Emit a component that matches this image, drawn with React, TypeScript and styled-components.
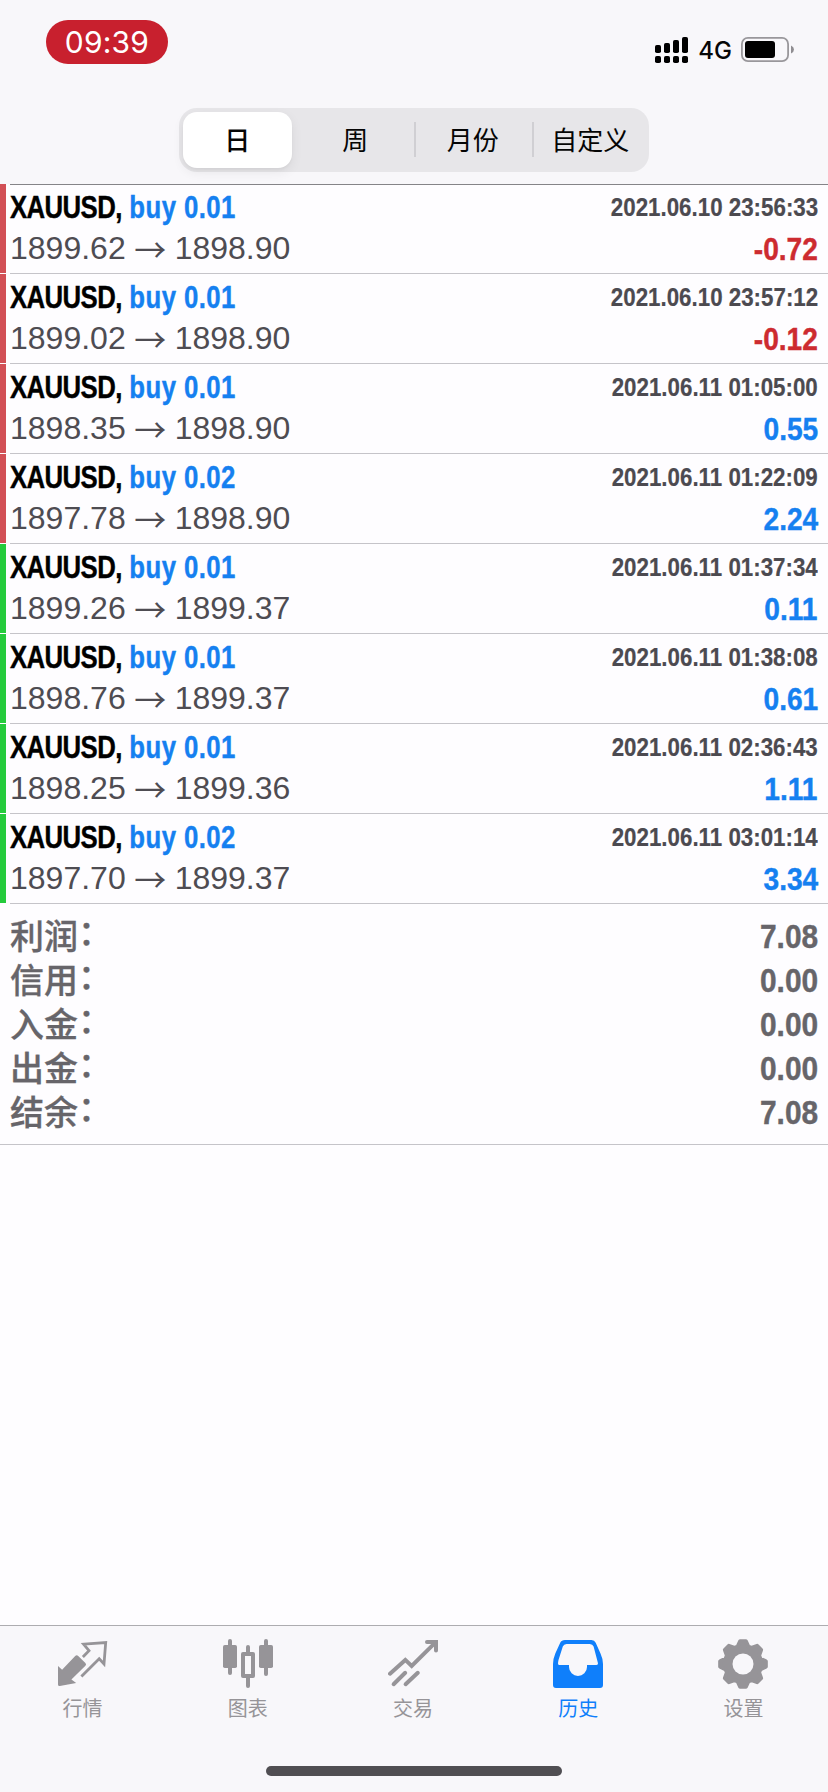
import React from "react";
import styled, { createGlobalStyle } from "styled-components";

const GlobalStyle = createGlobalStyle`
  * { box-sizing: border-box; }
  body { margin: 0; background: #fefdff; }
`;

const CJK = `"Liberation Sans", "Noto Sans CJK SC", sans-serif`;

const Screen = styled.div`
  width: 828px;
  height: 1792px;
  display: flex;
  flex-direction: column;
  background: #fefdff;
  font-family: ${CJK};
  overflow: hidden;
`;

const Header = styled.header`
  height: 184px;
  flex: none;
  background: #f8f7fa;
`;

const StatusBar = styled.div`
  height: 108px;
  display: flex;
  justify-content: space-between;
  align-items: flex-start;
  padding: 20px 33px 0 46px;
`;

const TimePill = styled.div`
  width: 122px;
  height: 44px;
  border-radius: 22px;
  background: #c8202e;
  color: #fff;
  font: 400 30px/44px Inter, sans-serif;
  letter-spacing: 0.2px;
  text-align: center;
`;

const Indicators = styled.div`
  display: flex;
  align-items: flex-start;
  padding-top: 17px;
`;

const Network = styled.span`
  font: 500 24px/28px Inter, sans-serif;
  color: #060606;
  margin: 0 9px 0 10px;
`;

const Segments = styled.div`
  width: 470px;
  height: 64px;
  margin: 0 auto;
  display: grid;
  grid-template-columns: repeat(4, 1fr);
  border-radius: 18px;
  background: #e7e6e9;
`;

const Segment = styled.button<{ $active?: boolean; $divided?: boolean }>`
  border: 0;
  padding: 0 0 3px;
  margin: ${(p) => (p.$active ? "4px 5px 4px 4px" : "0")};
  border-radius: ${(p) => (p.$active ? "14px" : "0")};
  background: ${(p) =>
    p.$active
      ? "#fff"
      : p.$divided
        ? "linear-gradient(#d0cfd3, #d0cfd3) 0 14px / 2px 35px no-repeat"
        : "transparent"};
  box-shadow: ${(p) => (p.$active ? "0 4px 12px rgba(0,0,0,.07), 0 2px 2px rgba(0,0,0,.03)" : "none")};
  color: #050505;
  font: ${(p) => (p.$active ? 500 : 400)} 26px/1 "Noto Sans CJK SC", sans-serif;
`;

const Deal = styled.article<{ $tone: "red" | "green"; $first: boolean }>`
  height: 90px;
  display: grid;
  grid-template-columns: 6px 4px 1fr;
  background:
    linear-gradient(#c5c4c9, #c5c4c9) 10px 89px / 100% 1px no-repeat,
    linear-gradient(${(p) => (p.$first ? "#858488, #858488" : "transparent, transparent")}) 10px 0 / 100% 1px no-repeat;
  &::before {
    content: "";
    height: 89px;
    background: ${(p) => (p.$tone === "red" ? "#d25056" : "#25cb3c")};
  }
`;

const DealBody = styled.div`
  grid-column: 3;
  padding: 6px 10px 0 0;
`;

const Line = styled.div<{ $h: number }>`
  display: flex;
  justify-content: space-between;
  height: ${(p) => p.$h}px;
  line-height: ${(p) => p.$h}px;
  white-space: nowrap;
`;

/* Bold grotesque squeezed horizontally to a condensed width. */
const Condensed = styled.span<{ $scale: number; $end?: boolean }>`
  display: inline-block;
  font-weight: 700;
  transform: scaleX(${(p) => p.$scale});
  transform-origin: ${(p) => (p.$end ? "right" : "left")} center;
  -webkit-text-stroke: 0.4px currentColor;
`;

const Symbol = styled(Condensed)`
  font-size: 32px;
  letter-spacing: -0.75px;
  color: #000;
`;

const Side = styled.span`
  margin-left: 9.5px;
  letter-spacing: 0.5px;
  color: #1580f0;
`;

const Stamp = styled(Condensed)`
  font-size: 25px;
  color: #4c4a50;
  -webkit-text-stroke-width: 0.2px;
`;

const Prices = styled.span`
  display: flex;
  font-size: 32px;
  color: #4e4c52;
`;

const Arrow = styled.span`
  width: 49px;
  text-align: center;
  font-family: "Noto Sans CJK SC", sans-serif;
`;

const Profit = styled(Condensed)<{ $loss: boolean }>`
  font-size: 32px;
  padding-top: 1px;
  color: ${(p) => (p.$loss ? "#cd2b30" : "#1580f0")};
`;

const Summary = styled.section`
  padding: 10px 10px;
  border-bottom: 1px solid #c5c4c9;
  color: #67656a;
  flex: none;
  height: 241px;
`;

const SumLabel = styled.span`
  padding-top: 1px;
  font-weight: 500;
  font-size: 34px;
  -webkit-text-stroke: 0.3px currentColor;
`;

const Colon = styled.span`
  line-height: 0;
  vertical-align: 4px;
`;

const SumValue = styled(Condensed)`
  font-size: 34px;
`;

const TabBar = styled.nav`
  margin-top: auto;
  height: 167px;
  flex: none;
  border-top: 1px solid #adacb0;
  background: #f8f7fa;
  display: flex;
  flex-direction: column;
`;

const Tabs = styled.div`
  display: grid;
  grid-template-columns: repeat(5, 1fr);
  padding: 13px 2px 0 0;
`;

const Tab = styled.a<{ $active: boolean }>`
  display: flex;
  flex-direction: column;
  align-items: center;
  color: ${(p) => (p.$active ? "#0f7ffb" : "#969498")};
  font: 400 20px/28px "Noto Sans CJK SC", sans-serif;
  gap: 5px;
`;

const HomeIndicator = styled.div`
  width: 296px;
  height: 10px;
  border-radius: 5px;
  background: #504e52;
  margin: auto auto 16px;
`;

const gearPath = (() => {
  const pts: string[] = [];
  const shape: [number, number][] = [[-17, 18.2], [-7, 23], [7, 23], [17, 18.2]];
  for (let i = 0; i < 8; i++) {
    for (const [a, r] of shape) {
      const t = ((i * 45 + a) * Math.PI) / 180;
      pts.push(`${(25 + r * Math.sin(t)).toFixed(2)} ${(25 - r * Math.cos(t)).toFixed(2)}`);
    }
  }
  return `M${pts.join("L")}Z`;
})();

const icons: Record<string, React.ReactNode> = {
  quotes: (
    <g transform="translate(-0.6 0)">
      <path
        d="M25.5 18 31.6 11.6 26.2 5.2 48.3 3.6 46.6 25 41.8 19.8 24 37.5"
        fill="none"
        stroke="currentColor"
        strokeWidth="2.8"
      />
      <path d="M.6 27 4.7 30.7 17.8 17Q19.3 15.5 20.8 16.9L28 24Q29.4 25.4 28 26.8L14 40.5 18.8 44 2.4 47Q.6 47.2 .6 45.5Z" fill="currentColor" />
    </g>
  ),
  chart: (
    <g fill="currentColor">
      <rect x="5" width="4" height="36" rx="2" />
      <rect y="6" width="14" height="23" rx="1.8" />
      <rect x="41" width="4" height="37" rx="2" />
      <rect x="36" y="6" width="14" height="23" rx="1.8" />
      <rect x="23" y="6" width="4" height="9" rx="2" />
      <rect x="23" y="36" width="4" height="13" rx="2" />
      <path fillRule="evenodd" d="M20 13H30Q32 13 32 15V37Q32 39 30 39H20Q18 39 18 37V15Q18 13 20 13ZM22 17V35H28V17Z" />
    </g>
  ),
  trade: (
    <g fill="none" stroke="currentColor" strokeWidth="4" strokeLinecap="round" strokeLinejoin="miter">
      <path d="M2 34.7 17.3 20.9 23.7 27 47.5 3.4" />
      <path d="M39 3H48V11.5" />
      <path d="M5.6 45.2 17.2 33.8M17.6 45.2 29.8 33.8" />
    </g>
  ),
  history: (
    <path
      fill="currentColor"
      fillRule="evenodd"
      d="M12 1H38.500Q41.500 1 42.700 3.800L47.500 14.500Q50 20 50 25V46Q50 49 47 49H3Q0 49 0 46V25Q0 20 2.300 14.500L7.200 3.800Q8.500 1 12 1ZM13.500 5Q10.800 5 9.800 7.600L5.500 21Q5 23 5 24.500Q5 26 6.600 26H16V28A9 9 0 0 0 34 28V26H43.500Q45.100 26 45 24.300L40.600 7.600Q39.600 5 36.800 5Z"
    />
  ),
  settings: (
    <>
      <path d={gearPath} fill="currentColor" stroke="currentColor" strokeWidth="4" strokeLinejoin="round" />
      <circle cx="25" cy="25" r="10.500" fill="#f8f7fa" />
    </>
  ),
};

const deals = [
  { lot: "0.01", open: "1899.62", close: "1898.90", time: "2021.06.10 23:56:33", profit: "-0.72", tone: "red" },
  { lot: "0.01", open: "1899.02", close: "1898.90", time: "2021.06.10 23:57:12", profit: "-0.12", tone: "red" },
  { lot: "0.01", open: "1898.35", close: "1898.90", time: "2021.06.11 01:05:00", profit: "0.55", tone: "red" },
  { lot: "0.02", open: "1897.78", close: "1898.90", time: "2021.06.11 01:22:09", profit: "2.24", tone: "red" },
  { lot: "0.01", open: "1899.26", close: "1899.37", time: "2021.06.11 01:37:34", profit: "0.11", tone: "green" },
  { lot: "0.01", open: "1898.76", close: "1899.37", time: "2021.06.11 01:38:08", profit: "0.61", tone: "green" },
  { lot: "0.01", open: "1898.25", close: "1899.36", time: "2021.06.11 02:36:43", profit: "1.11", tone: "green" },
  { lot: "0.02", open: "1897.70", close: "1899.37", time: "2021.06.11 03:01:14", profit: "3.34", tone: "green" },
] as const;

const totals = [
  ["利润", "7.08"],
  ["信用", "0.00"],
  ["入金", "0.00"],
  ["出金", "0.00"],
  ["结余", "7.08"],
];

const tabs = [
  ["quotes", "行情"],
  ["chart", "图表"],
  ["trade", "交易"],
  ["history", "历史"],
  ["settings", "设置"],
];

function SignalIcon() {
  return (
    <svg width="33" height="26" viewBox="0 0 33 26">
      {[8, 10, 13, 16].map((h, i) => (
        <g key={h}>
          <rect x={i * 9} y={16 - h} width="6" height={h} rx="1.8" />
          <rect x={i * 9} y="19" width="6" height="7" rx="1.8" />
        </g>
      ))}
    </svg>
  );
}

function BatteryIcon() {
  return (
    <svg width="54" height="26" viewBox="0 0 54 26">
      <rect x=".9" y=".9" width="46.200" height="23.200" rx="6" fill="none" stroke="#99979b" strokeWidth="1.800" />
      <rect x="4" y="4" width="30" height="17" rx="3" />
      <path d="M50 8.500Q53 10 53 12.500T50 16.500Z" fill="#8f8d91" />
    </svg>
  );
}

export default function App() {
  return (
    <Screen>
      <GlobalStyle />
      <Header>
        <StatusBar>
          <TimePill>09:39</TimePill>
          <Indicators>
            <SignalIcon />
            <Network>4G</Network>
            <BatteryIcon />
          </Indicators>
        </StatusBar>
        <Segments>
          <Segment $active>日</Segment>
          <Segment>周</Segment>
          <Segment $divided>月份</Segment>
          <Segment $divided>自定义</Segment>
        </Segments>
      </Header>
      <main>
        {deals.map((d, i) => (
          <Deal key={d.time} $tone={d.tone} $first={i === 0}>
            <DealBody>
              <Line $h={34}>
                <Symbol $scale={0.805}>
                  XAUUSD,<Side>buy {d.lot}</Side>
                </Symbol>
                <Stamp $scale={0.893} $end>
                  {d.time}
                </Stamp>
              </Line>
              <Line $h={48}>
                <Prices>
                  {d.open}
                  <Arrow>→</Arrow>
                  {d.close}
                </Prices>
                <Profit $scale={0.88} $end $loss={d.profit.startsWith("-")}>
                  {d.profit}
                </Profit>
              </Line>
            </DealBody>
          </Deal>
        ))}
      </main>
      <Summary>
        {totals.map(([label, value]) => (
          <Line key={label} $h={44}>
            <SumLabel>
              {label}
              <Colon>：</Colon>
            </SumLabel>
            <SumValue $scale={0.88} $end>
              {value}
            </SumValue>
          </Line>
        ))}
      </Summary>
      <TabBar>
        <Tabs>
          {tabs.map(([id, label]) => (
            <Tab key={id} $active={id === "history"}>
              <svg width="50" height="50" viewBox="0 0 50 50">
                {icons[id]}
              </svg>
              {label}
            </Tab>
          ))}
        </Tabs>
        <HomeIndicator />
      </TabBar>
    </Screen>
  );
}
